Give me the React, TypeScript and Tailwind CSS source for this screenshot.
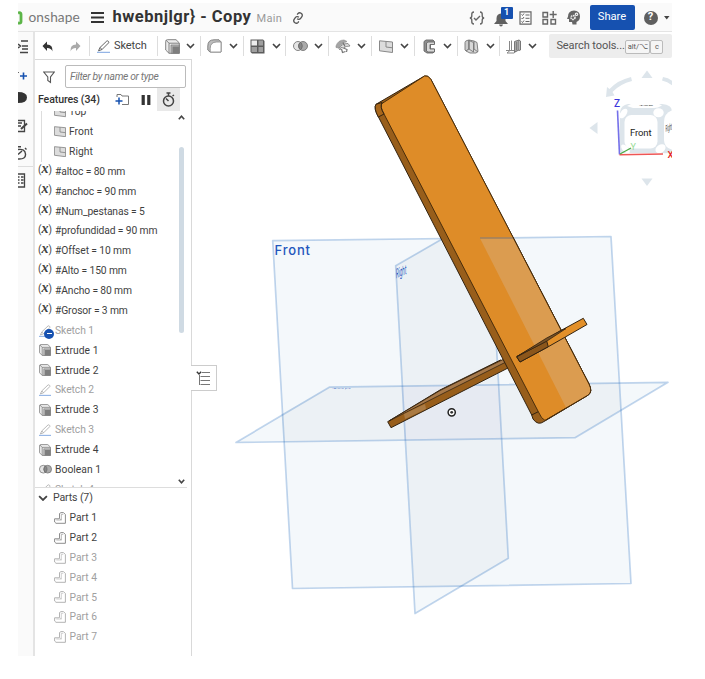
import type { ReactNode } from "react";

function Svg({ w, h, vb, children, className = "" }: { w: number; h: number; vb?: string; children: ReactNode; className?: string }) {
  return (
    <svg width={w} height={h} viewBox={vb ?? `0 0 ${w} ${h}`} fill="none" className={`shrink-0 ${className}`}>
      {children}
    </svg>
  );
}

const ExtrudeIcon = ({ size = 15 }: { size?: number }) => (
  <Svg w={size} h={size} vb="0 0 15 15">
    <path d="M.7 2.500Q.7.700 2.500.700H11l3.300 3.200V14.300H4L.7 11z" fill="#ececec" stroke="#777" strokeWidth=".9" />
    <path d="M1 1.200L4 4.200H14M4 4.200v10" stroke="#777" strokeWidth=".9" />
    <path d="M6 6h8.300v8.300H6z" fill="#b5b5b5" stroke="#777" strokeWidth=".7" />
    <path d="M7.500 7.500h6.800v6.800H7.500z" fill="#7e7e7e" />
  </Svg>
);
const PencilIcon = ({ w = 13, stroke = "#555" }: { w?: number; stroke?: string }) => (
  <Svg w={w} h={w} vb="0 0 13 13">
    <path d="M1.500 10.800L3 7.500 9.800 1c.8-.6 2.500.7 1.900 1.800L5 9.500zM3 7.500l2 2" stroke={stroke} strokeWidth="0.9" />
    <path d="M0 12.300h13" stroke="#7ba3e0" />
  </Svg>
);
const BooleanIcon = ({ w = 15 }: { w?: number }) => (
  <Svg w={w} h={(w * 12) / 15} vb="0 0 15 12">
    <circle cx="5" cy="6" r="4.500" fill="#e4e4e4" stroke="#777" strokeWidth=".9" />
    <circle cx="10" cy="6" r="4.500" fill="#aaa" stroke="#777" strokeWidth=".9" />
    <path d="M7.500 2.200a5 5 0 0 0 0 7.600a5 5 0 0 0 0-7.600z" fill="#888" stroke="#666" strokeWidth="0.800" />
  </Svg>
);
const PlaneIcon = ({ w = 14 }: { w?: number }) => (
  <Svg w={w} h={(w * 13) / 14} vb="0 0 14 13">
    <path d="M.5.800L13.500 2v10.500L.5 10.800z" fill="#dcdcdc" stroke="#888" />
    <path d="M7 1.400V7l6.500.8" stroke="#888" />
  </Svg>
);
const FilletIcon = () => (
  <Svg w={15} h={14}>
    <path d="M.8 11V7Q.8.800 7 .800h5L14 2.800V13H3z" fill="#bdbdbd" stroke="#777" strokeWidth=".9" />
    <path d="M3.200 13V9.500Q3.200 3 9.700 3H14v10z" fill="#fff" stroke="#888" strokeWidth=".8" />
  </Svg>
);
const PatternIcon = () => (
  <Svg w={15} h={15}>
    <path d="M.5.500h12.500l1.500 1.500v12.500H2L.5 13z" fill="#5c5c5c" />
    <path d="M1.500 1.500h5.500v5H1.500z" fill="#eee" />
    <path d="M8.500 1.500H13v5H8.500zM1.500 8H7v5H1.500zM8.500 8H13v5H8.500z" fill="#9f9f9f" />
  </Svg>
);
const SurfaceIcon = () => (
  <Svg w={16} h={15}>
    <path d="M1 7Q3 1 9 1l3 1.500Q6 4 4 9L1 8.500z" fill="#a5a5a5" stroke="#888" strokeWidth=".6" />
    <path d="M4 9.500Q6.500 4.500 13 4.500l2 2.500Q10.500 7 8.500 9L6 8.500 5 11z" fill="#ddd" stroke="#777" strokeWidth=".8" />
    <path d="M8 3.500l2 4M8.500 9l3.500 1.500-.5 2.500M6.500 10l1 3.500 3-1" stroke="#777" strokeWidth="1.200" />
  </Svg>
);
const ChannelIcon = () => (
  <Svg w={14} h={15}>
    <path d="M2 2.500L4 1h7l1.500 1.500V5h-4v5h4v2.500L11 14H5l-3-2z" fill="#8f8f8f" stroke="#666" strokeWidth=".9" />
    <path d="M4.500 4L6 3h6.500v2.500H8V10h4.500v3H6L4.500 12z" fill="#d9d9d9" stroke="#666" strokeWidth=".9" />
  </Svg>
);
const SheetIcon = () => (
  <Svg w={15} h={15}>
    <path d="M1 3.500Q1 2 3 1.500L5 1v9l-3 2-1-1z" fill="#ccc" stroke="#777" strokeWidth=".9" />
    <path d="M5 1l5 1 3 1.500 1 9-2 1.500H6L2 12l3-2z" fill="#d8d8d8" stroke="#777" strokeWidth=".9" />
    <path d="M5 1.500l4.500 2V13L5 10zM10 2v8l4 3" stroke="#777" strokeWidth=".9" />
  </Svg>
);
const FrameIcon = () => (
  <Svg w={16} h={15}>
    <path d="M3.500 2v9M5.500 1.500V11M0 11.500h10M1 14l3-2.500h7L8 14z" stroke="#888" />
    <path d="M8.500 2.500L13 1v10l-4.500 2z" fill="#aaa" stroke="#777" />
    <path d="M13 1l1.500 1v9l-1.500.5M10.700 3v8" stroke="#777" />
  </Svg>
);
const Chevron = ({ w = 9 }: { w?: number }) => (
  <Svg w={w} h={(w * 6) / 9} vb="0 0 9 6">
    <path d="M1 1l3.500 3.500L8 1" stroke="#444" strokeWidth="1.600" />
  </Svg>
);
const PartIcon = ({ dim }: { dim: boolean }) => (
  <Svg w={12} h={12}>
    <path d="M5.500 6.500V1.500L7 .600h2.500L11.400 2.500v8.800H2L.6 10V6.800h3.500z" fill="#fff" stroke={dim ? "#aaa" : "#808080"} strokeWidth=".9" />
    <path d="M7.300 2.300V8H2.300M5.500 6.500L7.300 8M7.300 2.300h2" stroke={dim ? "#bbb" : "#999"} strokeWidth=".7" />
  </Svg>
);

type Feature = { kind: "plane" | "var" | "sketch" | "extrude" | "boolean"; label: string; badge?: boolean };
const features: Feature[] = [
  { kind: "plane", label: "Top" },
  { kind: "plane", label: "Front" },
  { kind: "plane", label: "Right" },
  { kind: "var", label: "#altoc = 80 mm" },
  { kind: "var", label: "#anchoc = 90 mm" },
  { kind: "var", label: "#Num_pestanas = 5" },
  { kind: "var", label: "#profundidad = 90 mm" },
  { kind: "var", label: "#Offset = 10 mm" },
  { kind: "var", label: "#Alto = 150 mm" },
  { kind: "var", label: "#Ancho = 80 mm" },
  { kind: "var", label: "#Grosor = 3 mm" },
  { kind: "sketch", label: "Sketch 1", badge: true },
  { kind: "extrude", label: "Extrude 1" },
  { kind: "extrude", label: "Extrude 2" },
  { kind: "sketch", label: "Sketch 2" },
  { kind: "extrude", label: "Extrude 3" },
  { kind: "sketch", label: "Sketch 3" },
  { kind: "extrude", label: "Extrude 4" },
  { kind: "boolean", label: "Boolean 1" },
  { kind: "sketch", label: "Sketch 4" },
];

function FeatureIcon({ f }: { f: Feature }) {
  if (f.kind === "plane") return <PlaneIcon w={12} />;
  if (f.kind === "extrude") return <ExtrudeIcon size={12} />;
  if (f.kind === "boolean") return <BooleanIcon w={13} />;
  if (f.kind === "var")
    return (
      <span className="-mt-[3px] -ml-px flex items-center text-[10px] leading-none text-[#444]">
        (<b className="-mt-[2px] font-['Liberation_Serif',serif] text-[14px] leading-none italic">x</b>)
      </span>
    );
  return (
    <span className="relative">
      <PencilIcon w={12} stroke="#aaa" />
      {f.badge && (
        <span className="absolute top-[4px] left-[5px] flex size-[10px] items-center justify-center rounded-full bg-[#1651b0]">
          <span className="h-[1.500px] w-[5px] bg-white" />
        </span>
      )}
    </span>
  );
}

function FeatureRow({ f }: { f: Feature }) {
  const plane = f.kind === "plane";
  return (
    <div className={`flex h-[19.880px] shrink-0 items-center text-[10.300px] whitespace-nowrap ${plane ? "ml-[6px] border-l border-[#ddd] pl-[12px]" : "pl-[4px]"} ${f.kind === "sketch" ? "text-[#a0a0a0]" : "text-[#3f3f3f]"}`}>
      <span className={`flex shrink-0 items-center ${plane ? "w-[15px]" : "w-[16px]"}`}>
        <FeatureIcon f={f} />
      </span>
      <span className={f.kind === "var" ? "tracking-[-0.120px]" : f.kind === "sketch" ? "tracking-[-0.050px]" : "tracking-[0.050px]"}>{f.label}</span>
    </div>
  );
}

function Header() {
  return (
    <header className="flex h-[29px] shrink-0 items-center bg-[#fafafa] text-[#333]">
      <Svg w={5} h={14}>
        <path d="M0 2q3-1 3 1v8q0 1.500-3 1" stroke="#5cb548" strokeWidth="2.800" />
      </Svg>
      <span className="-mt-[2px] ml-[6px] w-[53px] font-['Lato',sans-serif] text-[13.700px] leading-none tracking-[0.100px] text-[#777]">onshape</span>
      <Svg w={13} h={13} className="ml-[9px]">
        <path d="M0 2h13M0 6.500h13M0 11h13" stroke="#333" strokeWidth="2" />
      </Svg>
      <span className="ml-[9px] w-[139px] text-[16.500px] leading-none font-bold tracking-[0.480px] whitespace-nowrap">hwebnjlgr&#125; - Copy</span>
      <span className="mt-[3px] ml-[5px] w-[26px] text-[11px] tracking-[0.300px] text-[#999]">Main</span>
      <Svg w={12} h={12} className="ml-[9px]" vb="0 0 24 24">
        <g transform="rotate(-12 12 12)">
          <path d="M10 13a5 5 0 0 0 7.500.5l3-3a5 5 0 0 0-7-7l-1.700 1.700M14 11a5 5 0 0 0-7.500-.5l-3 3a5 5 0 0 0 7 7l1.700-1.700" stroke="#555" strokeWidth="2.600" />
        </g>
      </Svg>
      <div className="ml-[165px] flex items-center">
        <Svg w={16} h={14}>
          <path d="M5 1Q2.500 1 2.800 4 3 7 .8 7 3 7 2.800 10 2.500 13 5 13M11 1q2.500 0 2.200 3Q13 7 15.200 7 13 7 13.200 10q.3 3-2.200 3M5 7l2 2 4-4" stroke="#666" strokeWidth="1.400" />
        </Svg>
        <div className="relative ml-[9px] h-[20px] w-[20px]">
          <Svg w={14} h={15} className="mt-[4px]">
            <path d="M0 12l2.500-3V6.500Q2.500 2 7 1.500 11.500 2 11.500 6.500V9l2.500 3zM5 12.500h4Q8.500 14.500 7 14.500T5 12.500z" fill="#606060" />
          </Svg>
          <span className="absolute -top-px left-[7px] flex h-[12px] w-[12px] items-center justify-center rounded-[1px] bg-[#1651b0] text-[9px] font-bold text-white">1</span>
        </div>
        <Svg w={13} h={14} className="ml-[5px]">
          <path d="M1 .8h11v12.400H1z" stroke="#666" strokeWidth="1.200" />
          <path d="M2.500 3.500l1 1 1.500-2M2.500 7l1 1L5 6M2.500 10.500l1 1L5 9.500M6.500 4h4M6.500 7.300h4M6.500 10.500h4" stroke="#666" />
        </Svg>
        <Svg w={15} h={14} className="ml-[10px]">
          <path d="M1 1.500h4.500V6H1zM1 8.500h4.500V13H1zM9 8.500h4.500V13H9zM11.200 0v7M7.700 3.500h7" stroke="#666" strokeWidth="1.400" />
        </Svg>
        <Svg w={14} h={15} className="ml-[10px]">
          <path d="M7 .5Q1 .8 1 6.500L0 9h2v3h3l.5 2.500H9.500V12Q13 10.500 13 6.500 13 .8 7 .5z" fill="#666" />
          <circle cx="6" cy="7.500" r="2" stroke="#eee" strokeWidth="1.600" strokeDasharray="1.500 .6" />
          <circle cx="9.500" cy="4.300" r="1.200" stroke="#eee" strokeWidth="1.200" />
        </Svg>
        <button className="ml-[9px] flex h-[25px] w-[45px] items-center justify-center rounded-[2px] bg-[#1651b0] text-[11.200px] text-white">Share</button>
        <span className="ml-[9px] flex size-[14px] items-center justify-center rounded-full bg-[#5f5f5f] text-[11px] font-bold text-white">?</span>
        <Svg w={6} h={4} className="ml-[6px]">
          <path d="M0 0h5.500L2.750 3.500z" fill="#444" />
        </Svg>
      </div>
    </header>
  );
}

function Toolbar() {
  const tools = [ExtrudeIcon, FilletIcon, PatternIcon, BooleanIcon, SurfaceIcon, PlaneIcon, ChannelIcon, SheetIcon, FrameIcon];
  return (
    <div className="flex h-[27px] shrink-0 items-center pt-px">
      <Svg w={12} h={11} className="ml-[7px]">
        <path d="M5 .5v3Q11 3.500 10.500 10.500 9.500 7 5 7v3L.5 5z" fill="#333" />
      </Svg>
      <Svg w={12} h={11} className="ml-[15px]">
        <path d="M7 .5v3Q1 3.500 1.500 10.500 2.500 7 7 7v3L11.500 5z" fill="#aaa" />
      </Svg>
      <span className="ml-[8px] h-[20px] w-px bg-[#ddd]" />
      <div className="flex w-[67px] items-center pl-[7px] text-[11px] text-[#444]">
        <PencilIcon w={13} />
        <span className="ml-[4px] tracking-[-0.100px]">Sketch</span>
      </div>
      {tools.map((Icon, i) => (
        <div key={i} className={`flex h-[20px] shrink-0 items-center border-l border-[#ddd] pl-[6px] ${i === 8 ? "w-[42px]" : "w-[42.800px]"}`}>
          <span className="flex w-[16px] justify-center">
            <Icon />
          </span>
          <span className="ml-[6px]">
            <Chevron />
          </span>
        </div>
      ))}
      <div className="ml-[8px] flex h-[24px] flex-1 items-center rounded-[2px] bg-[#ededed] pl-[7px] text-[11px] whitespace-nowrap text-[#555]">
        <span className="w-[67px] tracking-[-0.080px]">Search tools...</span>
        <span className="mt-[2px] ml-[2px] flex h-[14px] w-[25px] items-center justify-center rounded-[2px] border border-[#bbb] bg-[#f5f5f5] text-[7.500px]">alt/⌥</span>
        <span className="mt-[2px] flex h-[14px] w-[13px] items-center justify-center rounded-[2px] border border-[#bbb] bg-[#f5f5f5] text-[7.500px]">c</span>
      </div>
    </div>
  );
}

function Rail() {
  return (
    <aside className="flex w-[17.500px] shrink-0 flex-col border-t border-r-2 border-[#e4e4e4] bg-[#fafafa]">
      <Svg w={10} h={15} className="mt-[7px]">
        <path d="M3 2h7M4 7h6M4 10h6M2 13.500h8M0 5l2.500 2L0 9" stroke="#444" strokeWidth="1.500" />
      </Svg>
      <Svg w={10} h={10} className="mt-[17px]">
        <path d="M5.500 1.500v7M2 5h7" stroke="#1651b0" strokeWidth="1.600" />
        <path d="M0 1l1 1" stroke="#666" />
      </Svg>
      <Svg w={10} h={11} className="mt-[11px]">
        <path d="M0 0q9 0 9 5.500T0 11z" fill="#333" />
      </Svg>
      <Svg w={10} h={14} className="mt-[16px]">
        <path d="M0 1.500h6.500v11H0M0 4h4M0 7h3" stroke="#444" strokeWidth="1.300" />
        <path d="M3 10L9 4.500" stroke="#444" strokeWidth="2" />
      </Svg>
      <Svg w={10} h={14} className="mt-[13px]">
        <path d="M0 3.500Q7 2.500 7.500 8T0 13M3 .700H0M7 2l1.500 1.500M0 8.500L4 5" stroke="#444" strokeWidth="1.400" />
      </Svg>
      <span className="mt-[6px] h-px w-full bg-[#ddd]" />
      <Svg w={10} h={15} className="mt-[6px]">
        <path d="M0 1h6.500v13H0M0 4h1.500M3 4h2.500M0 7h1.500M3 7h2.500M0 10h1.500M3 10h2.500" stroke="#444" strokeWidth="1.300" />
      </Svg>
    </aside>
  );
}

function FeaturePanel() {
  return (
    <section className="flex w-[157px] shrink-0 flex-col border-t border-r border-[#d9d9d9]">
      <div className="flex h-[28px] shrink-0 items-end">
        <Svg w={12} h={13} className="mb-[4px] ml-[8px]">
          <path d="M.700 1h10.600L7.500 6v5.500L4.800 9.500V6z" stroke="#555" strokeWidth="1.100" />
        </Svg>
        <div className="ml-[10px] flex h-[23px] w-[121px] items-center rounded-[2px] border border-[#bbb] pl-[4px] text-[10.300px] tracking-[-0.330px] whitespace-nowrap text-[#777] italic">Filter by name or type</div>
      </div>
      <div className="flex h-[23px] shrink-0 items-center text-[#333]">
        <span className="ml-[3px] w-[64px] text-[10.600px] font-medium tracking-[-0.120px] whitespace-nowrap">Features (34)</span>
        <Svg w={15} h={13} className="ml-[13px]">
          <path d="M2 4V1.500h4l1 1.500h6.500v8.500H7" stroke="#777" />
          <path d="M4 4.500v7M.5 8h7" stroke="#1651b0" strokeWidth="1.500" />
        </Svg>
        <Svg w={10} h={12} className="ml-[11px]">
          <path d="M2.200 1v10M7.800 1v10" stroke="#333" strokeWidth="3.200" />
        </Svg>
        <span className="ml-[6px] flex h-[23px] w-[23px] items-center justify-center bg-[#e9e9e9]">
          <Svg w={13} h={15}>
            <circle cx="6.500" cy="9" r="5" stroke="#444" strokeWidth="1.500" />
            <path d="M4.500 1h4M6.500 1v3M10.500 4l1.500-1M6.500 9L4 6.500" stroke="#444" strokeWidth="1.500" />
          </Svg>
        </span>
      </div>
      <div className="flex h-[376px] shrink-0 overflow-hidden">
        <div className="-mt-[9px] flex flex-1 flex-col">
          {features.map((f) => (
            <FeatureRow key={f.label} f={f} />
          ))}
        </div>
        <div className="flex w-[19px] flex-col items-center">
          <Svg w={7} h={5} className="mt-[4px]">
            <path d="M.8 4.200l2.700-3 2.700 3" stroke="#444" strokeWidth="1.600" />
          </Svg>
          <span className="mt-[27px] h-[186px] w-[5px] rounded-full bg-[#cfdae3]" />
          <Svg w={7} h={5} className="mt-[146px]">
            <path d="M.8.800l2.700 3 2.700-3" stroke="#444" strokeWidth="1.600" />
          </Svg>
        </div>
      </div>
      <div className="mr-[4px] h-px bg-[#ddd]" />
      <div className="flex h-[19.880px] items-center pl-[3px] text-[10.600px] text-[#444]">
        <Chevron w={10} />
        <span className="ml-[5px] tracking-[-0.150px]">Parts (7)</span>
      </div>
      {[1, 2, 3, 4, 5, 6, 7].map((n) => (
        <div key={n} className={`flex h-[19.880px] items-center pl-[19px] text-[10.300px] ${n > 2 ? "text-[#a0a0a0]" : "text-[#3f3f3f]"}`}>
          <PartIcon dim={n > 2} />
          <span className="ml-[3.500px]">Part {n}</span>
        </div>
      ))}
    </section>
  );
}

function Viewport() {
  return (
    <main className="relative flex-1">
      <svg viewBox="192 59 480 597" width="480" height="597" fill="none" className="block overflow-hidden">
        <g fill="#f4f8fb">
          <path d="M272.700 240.700L611 236.500 631 583.500 292.500 588.500z" />
          <path d="M395.700 265.800L489 212 508.300 558.300 415 613.500z" />
          <path d="M329.300 387.200L668 382.300 575 437.700 236 442.500z" />
        </g>
        <g fill="#ecf1f5">
          <path d="M395.700 265.800L441 239H490.500L508.300 558.300 462 586 414 587z" />
          <path d="M281.500 414L329.300 387.200 619 383 621 410 575 437.700 284 441.800z" />
        </g>
        <path d="M401.500 386.300L498.500 384.800 501.500 438.800 404.500 440z" fill="#e6eaf2" />
        <g stroke="#1e68bb" strokeOpacity="0.270" strokeWidth="1.700" strokeLinejoin="round">
          <path d="M272.700 240.700L611 236.500 631 583.500 292.500 588.500z" />
          <path d="M395.700 265.800L489 212 508.300 558.300 415 613.500z" />
          <path d="M329.300 387.200L668 382.300 575 437.700 236 442.500z" />
        </g>
        <g fill="#2356bd" fontFamily="Inter, sans-serif">
          <text x="274.500" y="255.300" fontSize="13" fontWeight="500" textLength="35.500">Front</text>
          <text transform="translate(396 278.500) skewY(-24) scale(.37 1.150)" fontSize="11.500">Right</text>
          <text transform="translate(331 388.500) skewX(-35) scale(1.600 .18)" fontSize="7" fillOpacity=".7">Top</text>
        </g>
        <g stroke="#332310" strokeWidth="1" strokeLinejoin="round">
          <path d="M387.700 421.700L440 390 500.500 360 508 363.500V368L391 427.700z" fill="#985e1b" />
          <path d="M389 421L440 390.500 503 359.500 505 362.500 445 392.500z" fill="#a7794a" strokeWidth=".8" />
          <path d="M404 414l21-10 1 5-21 10z" fill="#aa7a43" stroke="none" />
          <path d="M376 104.300L424.500 76Q428 74.800 431 79.500L512.700 236.700 589 384Q593 392 588 395.200L544 421.500Q538 426 533 419L531.700 415 378.300 116.700Q373.500 108 376 104.300z" fill="#985e1b" />
          <path d="M382 103.500L424.500 76Q428 74.800 431 79.500L512.700 236.700 589 384Q593 392 588 395.200L545 420.500Q541.500 419 538.300 411.700L384 114Q379.500 106 382 103.500z" fill="#de8c28" stroke="#4a2e0c" />
          <path d="M376 104.300L382 102.500Q379.500 107 384 114L378.300 117Q373.500 108 376 104.300z" fill="#a9671b" />
          <path d="M531.700 415L538.300 411.700" />
        </g>
        <path d="M480 238.200L512.900 237.800 589 384.500Q592 392 587.500 395L566 407.500z" fill="#db9c50" />
        <path d="M480 238h33" stroke="#9d8062" strokeWidth="1.600" />
        <path d="M512.700 236.700L589 384Q593 392 588 395.200L545 420.500" stroke="#4a2e0c" />
        <g stroke="#332310" strokeLinejoin="round">
          <path d="M516.700 356.700L546.700 339 560 331 583.300 318.300 587 324.500 564.300 337.600 548.300 346.700 520 362z" fill="#e39029" />
          <path d="M516.700 356.700L546.700 341 548.300 346.700 520 362z" fill="#8b561b" />
          <path d="M517 356.500L546.700 338 560 331 566 328.500 547 341z" fill="#765026" strokeWidth=".8" />
        </g>
        <circle cx="451.700" cy="412.300" r="3.600" fill="#fff" stroke="#222" strokeWidth="1.500" />
        <circle cx="451.700" cy="412.300" r="1.400" fill="#333" />

        <g fill="#dde5eb">
          <path d="M641.500 78h11L647 70.500zM641.500 178.500h11l-5.500 7.500zM597.500 122v12L589.500 128z" />
          <path d="M606 97l1-10 2.500 2Q618 80 631 77l1 4Q620 84 612.500 92l2 3.500z" />
          <path d="M663 77q6 1 10 4.500V86q-5-4-11-5.500z" />
          <path d="M620 112q1-7 8-8h34q10 1 10 7v41q-4 2-9 1h-42l-2-3z" />
        </g>
        <path d="M627 106l5-2.500h26l4 2q-5 3-9 2.500h-20z" fill="#fff" />
        <rect x="624.500" y="115" width="33" height="33.500" rx="7" fill="#fff" />
        <path d="M673 110q-9 3-9 12v18q0 8 9 10z" fill="#fff" />
        <g fill="#fff">
          <ellipse cx="623.500" cy="113.500" rx="3" ry="5.500" transform="rotate(35 623.500 113.500)" />
          <ellipse cx="658.500" cy="112.700" rx="5.200" ry="4.500" />
          <ellipse cx="660.500" cy="148.700" rx="5.500" ry="4" transform="rotate(-35 660.500 148.700)" />
          <ellipse cx="625.500" cy="149" rx="5.500" ry="2.800" transform="rotate(45 625.500 149)" />
        </g>
        <path d="M617.500 110.500L619.500 154.500" stroke="#7571ea" strokeWidth="1.600" />
        <path d="M619.500 154.800L663 154" stroke="#ee5555" strokeWidth="1.600" />
        <path d="M620 154l11-6" stroke="#4cac45" strokeWidth="1.300" />
        <g fontFamily="Roboto, sans-serif" fontSize="9.500">
          <text x="630" y="135.500" fill="#222" textLength="21.500">Front</text>
          <text x="614" y="107" fill="#3b36dc" fontSize="10" fontWeight="500">Z</text>
          <text x="667.500" y="158" fill="#e32525" fontWeight="500">X</text>
          <text x="630.500" y="150" fill="#99dc97" fontSize="9">Y</text>
          <text transform="translate(665.500 132) skewY(-20) scale(.3 1)" fill="#444">Right</text>
          <text transform="translate(639 106) scale(.9 .25)" fill="#555">Top</text>
        </g>
      </svg>
      <div className="absolute top-[306px] -left-px flex h-[26px] w-[26px] items-center justify-center border border-l-0 border-[#ccc] bg-white">
        <Svg w={15} h={15}>
          <path d="M6 1.500h8M4.500 5.500H14M4.500 9.500H14M4.500 13.500H14M3.500 4v10" stroke="#777" />
          <path d="M.8.800L3 3 5.200.800" stroke="#333" strokeWidth="1.400" />
        </Svg>
      </div>
    </main>
  );
}

export default function App() {
  return (
    <div className="h-[679px] w-[705px] overflow-hidden bg-white font-['Roboto',sans-serif]">
      <div className="ml-[17.500px] flex h-[656px] w-[654.500px] flex-col pt-[3px]">
        <Header />
        <div className="-mt-px flex min-h-0 flex-1">
          <Rail />
          <div className="flex min-w-0 flex-1 flex-col border-t border-[#e4e4e4]">
            <Toolbar />
            <div className="flex min-h-0 flex-1">
              <FeaturePanel />
              <Viewport />
            </div>
          </div>
        </div>
      </div>
    </div>
  );
}
